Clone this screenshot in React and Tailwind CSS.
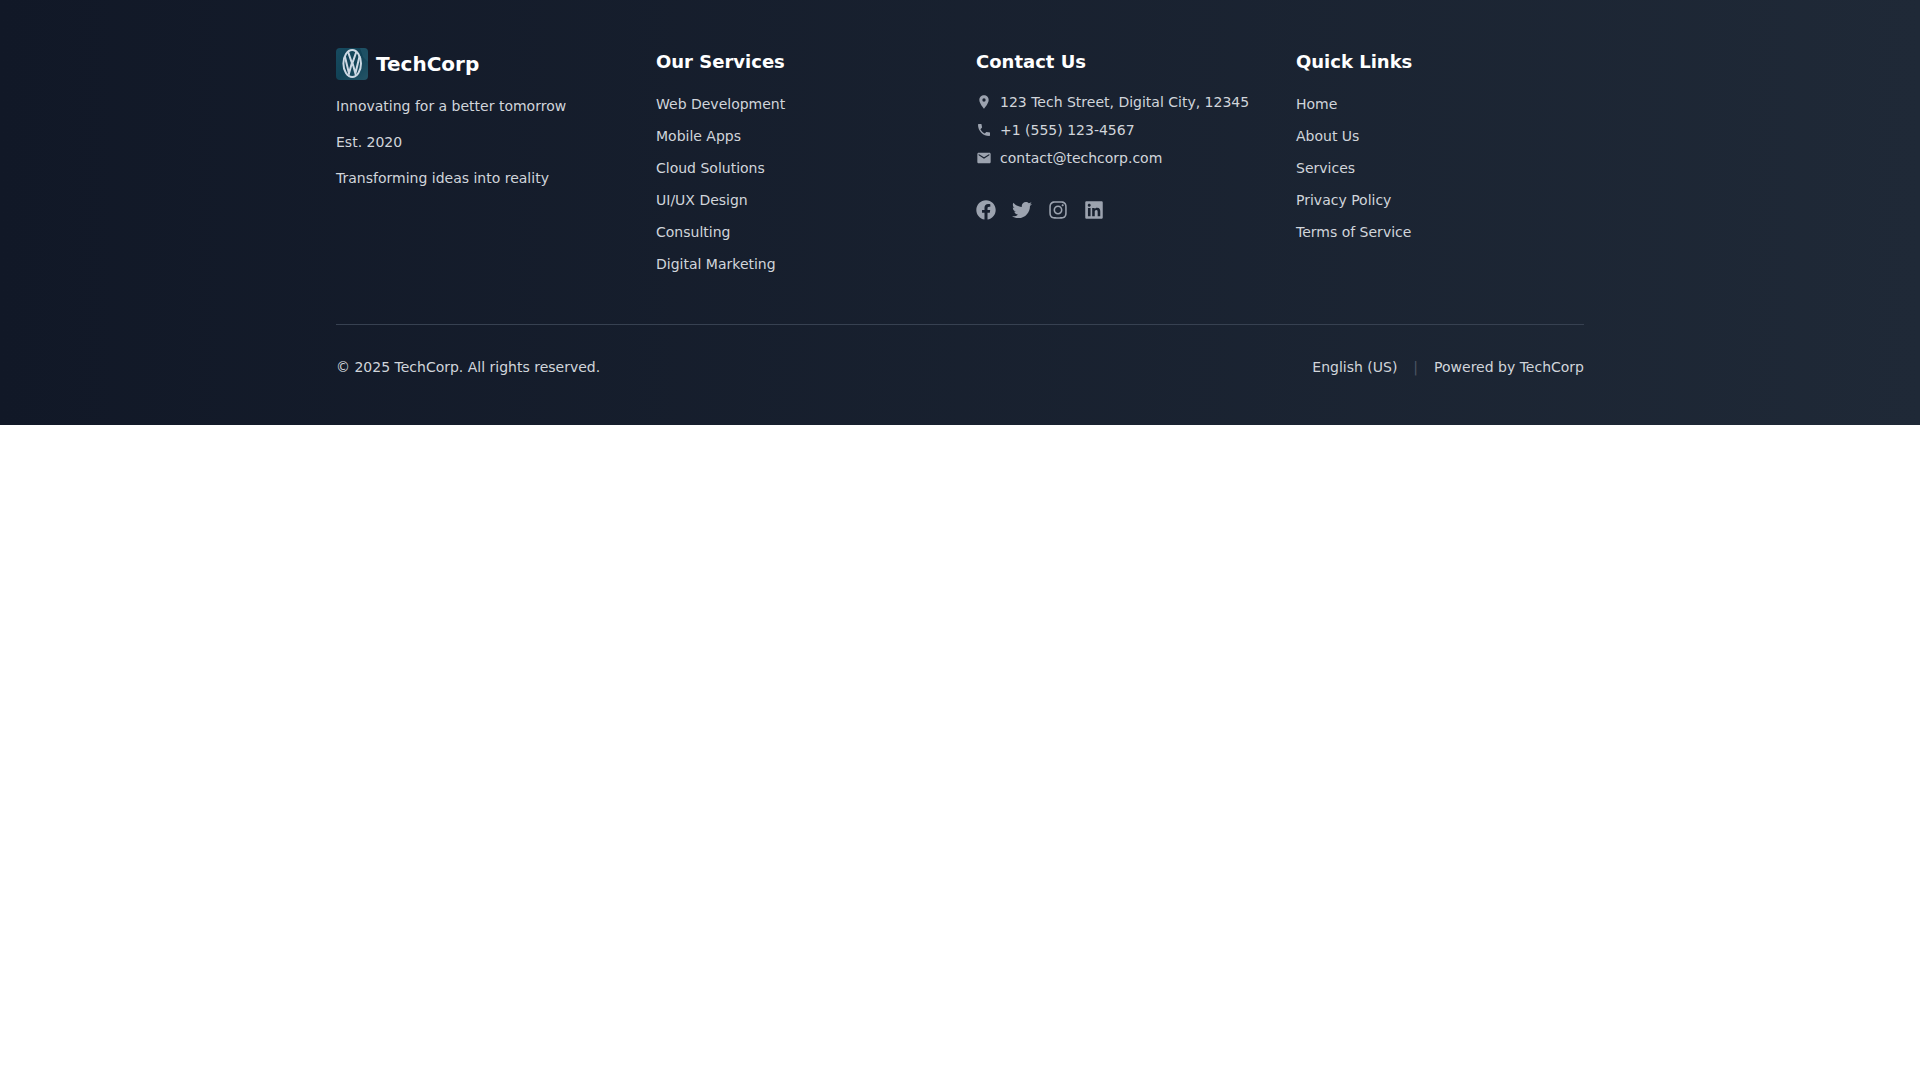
import { FaFacebook, FaTwitter, FaInstagram, FaLinkedin } from 'react-icons/fa';
import { MdLocationOn, MdPhone, MdEmail } from 'react-icons/md';

const services = [
  'Web Development',
  'Mobile Apps',
  'Cloud Solutions',
  'UI/UX Design',
  'Consulting',
  'Digital Marketing',
];

const quickLinks = ['Home', 'About Us', 'Services', 'Privacy Policy', 'Terms of Service'];

const socials = [
  { label: 'Facebook', icon: FaFacebook },
  { label: 'Twitter', icon: FaTwitter },
  { label: 'Instagram', icon: FaInstagram },
  { label: 'LinkedIn', icon: FaLinkedin },
];

function Logo() {
  return (
    <svg viewBox="0 0 32 32" className="w-8 h-8 rounded" role="img" aria-label="TechCorp logo">
      <defs>
        <linearGradient id="logo-bg" x1="0" y1="0" x2="1" y2="1">
          <stop offset="0" stopColor="#174b60" />
          <stop offset="0.5" stopColor="#114256" />
          <stop offset="1" stopColor="#245467" />
        </linearGradient>
      </defs>
      <rect width="32" height="32" fill="url(#logo-bg)" />
      <path d="M24 0h8v14l-5-5z" fill="#2a5d72" opacity="0.5" />
      <g fill="none" stroke="#ccd8e3" strokeWidth="2">
        <ellipse cx="16.2" cy="15.5" rx="8.8" ry="13.5" />
        <path d="M12 3.6l3.6 10.4h1.2L20.4 3.6" />
        <path d="M8.8 8l4.2 17.4L15.6 16h1.2l2.6 9.4L23.6 8" />
      </g>
    </svg>
  );
}

function LinkColumn({ title, links }) {
  return (
    <div>
      <h3 className="text-lg font-semibold text-white mb-4">{title}</h3>
      <ul className="space-y-2">
        {links.map((link) => (
          <li key={link}>
            <a href="#" className="text-sm leading-6 hover:text-white transition-colors">
              {link}
            </a>
          </li>
        ))}
      </ul>
    </div>
  );
}

export default function App() {
  return (
    <footer className="bg-linear-to-r/srgb from-[#111827] to-[#1f2937] text-[#d1d5db] font-['DejaVu_Sans',sans-serif]">
      <div className="max-w-7xl mx-auto px-4 py-12">
        <div className="grid grid-cols-1 md:grid-cols-2 lg:grid-cols-4 gap-8">
          {/* Company info */}
          <div className="space-y-4">
            <div className="flex items-center gap-2">
              <Logo />
              <h2 className="text-xl font-bold text-white">TechCorp</h2>
            </div>
            <p className="text-sm">Innovating for a better tomorrow</p>
            <p className="text-sm">Est. 2020</p>
            <p className="text-sm">Transforming ideas into reality</p>
          </div>

          <LinkColumn title="Our Services" links={services} />

          {/* Contact */}
          <div>
            <h3 className="text-lg font-semibold text-white mb-4">Contact Us</h3>
            <address className="not-italic text-sm space-y-2">
              <p className="flex items-center gap-2">
                <MdLocationOn size={16} className="text-[#9ca3af] shrink-0" />
                <span>123 Tech Street, Digital City, 12345</span>
              </p>
              <p className="flex items-center gap-2">
                <MdPhone size={16} className="text-[#9ca3af] shrink-0" />
                <span>+1 (555) 123-4567</span>
              </p>
              <p className="flex items-center gap-2">
                <MdEmail size={16} className="text-[#9ca3af] shrink-0" />
                <a href="mailto:contact@techcorp.com" className="hover:text-white transition-colors">
                  contact@techcorp.com
                </a>
              </p>
            </address>
            <div className="flex gap-4 mt-8">
              {socials.map(({ label, icon: Icon }) => (
                <a key={label} href="#" aria-label={label} className="text-[#9ca3af] hover:text-white transition-colors">
                  <Icon size={20} />
                </a>
              ))}
            </div>
          </div>

          <LinkColumn title="Quick Links" links={quickLinks} />
        </div>

        <div className="mt-12 pt-8 border-t border-[#374151] flex flex-col md:flex-row justify-between items-center gap-4 text-sm">
          <p>© 2025 TechCorp. All rights reserved.</p>
          <div className="flex items-center gap-4">
            <span>English (US)</span>
            <span className="text-[#4b5563]">|</span>
            <span>Powered by TechCorp</span>
          </div>
        </div>
      </div>
    </footer>
  );
}
